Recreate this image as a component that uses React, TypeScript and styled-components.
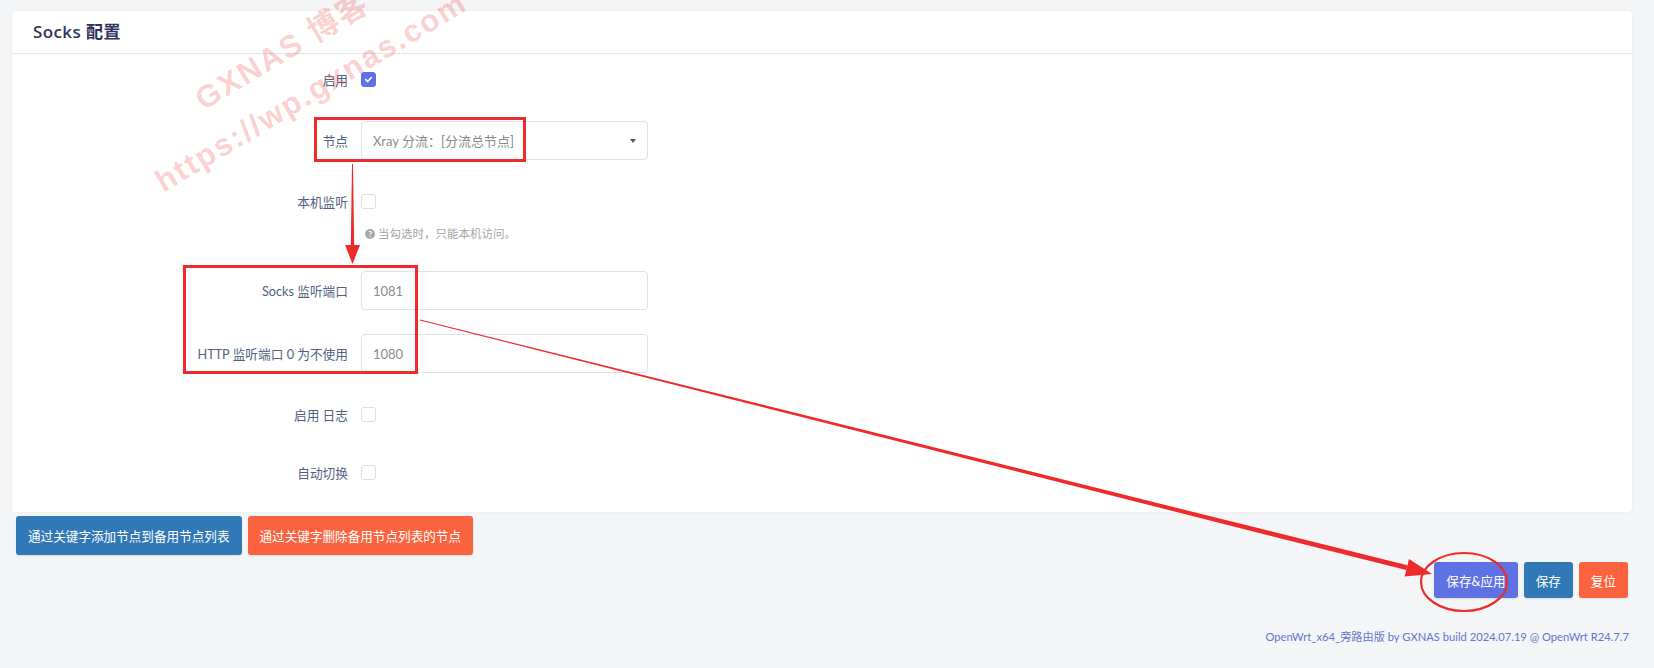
import styled, { createGlobalStyle } from "styled-components";

const GlobalStyle = createGlobalStyle`
  html, body {
    margin: 0;
    padding: 0;
    background: #f4f5f7;
    overflow: hidden;
  }
  body {
    font-family: Lato, "Noto Sans CJK SC", sans-serif;
  }
`;

const Page = styled.div`
  position: relative;
  width: 1654px;
  height: 668px;
  box-sizing: border-box;
  padding: 11px 22px 0 12px;
  background: #f4f5f7;
`;

const Card = styled.section`
  background: #fff;
  border-radius: 4px;
  box-shadow: 0 0 3px rgba(136, 152, 170, 0.12);
`;

const CardTitle = styled.h3`
  margin: 0;
  height: 42px;
  line-height: 42px;
  padding: 0 21px;
  border-bottom: 1px solid #e3e5e9;
  font-family: "Open Sans", "Noto Sans CJK SC", sans-serif;
  font-size: 17px;
  font-weight: 600;
  letter-spacing: 0.4px;
  color: #32325d;
`;

const CardBody = styled.div`
  display: flex;
  flex-direction: column;
  gap: 22px;
  padding: 6px 0 20px;
`;

const Row = styled.div<{ $push?: number }>`
  display: grid;
  grid-template-columns: 336px 287px;
  grid-template-rows: 39px;
  grid-auto-rows: auto;
  column-gap: 13px;
  align-items: center;
  margin-top: ${(p) => p.$push ?? 0}px;
`;

const Label = styled.label`
  text-align: right;
  font-size: 12.7px;
  color: #525f7f;
  white-space: nowrap;
`;

const Check = styled.span<{ $on?: boolean }>`
  display: inline-flex;
  align-items: center;
  justify-content: center;
  box-sizing: border-box;
  width: 15px;
  height: 15px;
  border-radius: 3px;
  border: 1px solid ${(p) => (p.$on ? "#5e72e4" : "#dcdfe4")};
  background: ${(p) => (p.$on ? "#5e72e4" : "#fff")};
`;

const Box = styled.div`
  display: flex;
  align-items: center;
  justify-content: space-between;
  box-sizing: border-box;
  height: 39px;
  padding: 0 11px;
  border: 1px solid #dee1e6;
  border-radius: 4px;
  font-size: 13px;
  color: #8a8a8a;
`;

const Caret = styled.span`
  width: 0;
  height: 0;
  border-left: 3.5px solid transparent;
  border-right: 3.5px solid transparent;
  border-top: 4px solid #555;
`;

const Help = styled.div`
  grid-column: 2;
  display: flex;
  align-items: center;
  gap: 3px;
  margin: 4px 0 0 4px;
  padding-bottom: 6px;
  font-size: 11.5px;
  line-height: 18px;
  color: #a4a4a4;
  white-space: nowrap;
`;

const HelpIcon = styled.span`
  display: inline-flex;
  align-items: center;
  justify-content: center;
  width: 10px;
  height: 10px;
  border-radius: 50%;
  background: #a8a8a8;
  color: #fff;
  font-size: 8px;
  font-weight: 700;
  line-height: 1;
`;

const ButtonBar = styled.div<{ $right?: boolean }>`
  display: flex;
  justify-content: ${(p) => (p.$right ? "flex-end" : "flex-start")};
  gap: 6px;
  margin-top: ${(p) => (p.$right ? "7px" : "4px")};
  padding: ${(p) => (p.$right ? "0 4px 0 0" : "0 0 0 4px")};
`;

const Button = styled.button<{ $tone: "primary" | "blue" | "orange"; $tall?: boolean }>`
  height: ${(p) => (p.$tall ? "39px" : "36px")};
  padding: 0 12px;
  border: none;
  border-radius: 3px;
  font-family: Lato, "Noto Sans CJK SC", sans-serif;
  font-size: 12.6px;
  color: #fff;
  background: ${(p) =>
    p.$tone === "primary" ? "#5e72e4" : p.$tone === "blue" ? "#3178b7" : "#fb633f"};
  box-shadow: 0 1px 2px rgba(0, 0, 0, 0.1);
`;

const Footer = styled.div`
  margin: 30px 3px 0 0;
  text-align: right;
  font-size: 11.2px;
  line-height: 18px;
  color: #6674cc;
`;

const Watermark = styled.div<{ $left: number; $top: number }>`
  position: absolute;
  left: ${(p) => p.$left}px;
  top: ${(p) => p.$top}px;
  font-family: "Liberation Sans", "Noto Sans CJK SC", sans-serif;
  font-size: 31px;
  font-weight: 700;
  line-height: 31px;
  letter-spacing: 2px;
  white-space: nowrap;
  color: rgba(240, 50, 50, 0.24);
  transform-origin: 0 100%;
  transform: rotate(-31deg);
  pointer-events: none;
`;

const Marks = styled.svg`
  position: absolute;
  left: 0;
  top: 0;
  pointer-events: none;
`;

const CheckMark = () => (
  <svg width="9" height="9" viewBox="0 0 10 10">
    <path d="M2 5.2 L4.2 7.3 L8.2 2.8" fill="none" stroke="#fff" strokeWidth="1.8" strokeLinecap="round" strokeLinejoin="round" />
  </svg>
);

export default function App() {
  return (
    <>
      <GlobalStyle />
      <Page>
        <Card>
          <CardTitle>Socks 配置</CardTitle>
          <CardBody>
            <Row>
              <Label>启用</Label>
              <Check $on>
                <CheckMark />
              </Check>
            </Row>
            <Row>
              <Label>节点</Label>
              <Box>
                <span>Xray 分流：[分流总节点]</span>
                <Caret />
              </Box>
            </Row>
            <Row>
              <Label>本机监听</Label>
              <Check />
              <Help>
                <HelpIcon>?</HelpIcon>
                当勾选时，只能本机访问。
              </Help>
            </Row>
            <Row>
              <Label>Socks 监听端口</Label>
              <Box>1081</Box>
            </Row>
            <Row $push={2}>
              <Label>HTTP 监听端口 0 为不使用</Label>
              <Box>1080</Box>
            </Row>
            <Row>
              <Label>启用 日志</Label>
              <Check />
            </Row>
            <Row $push={-3}>
              <Label>自动切换</Label>
              <Check />
            </Row>
          </CardBody>
        </Card>

        <ButtonBar>
          <Button $tone="blue" $tall>通过关键字添加节点到备用节点列表</Button>
          <Button $tone="orange" $tall>通过关键字删除备用节点列表的节点</Button>
        </ButtonBar>

        <ButtonBar $right>
          <Button $tone="primary">保存&amp;应用</Button>
          <Button $tone="blue">保存</Button>
          <Button $tone="orange">复位</Button>
        </ButtonBar>

        <Footer>OpenWrt_x64_旁路由版 by GXNAS build 2024.07.19 @ OpenWrt R24.7.7</Footer>

        <Watermark $left={206} $top={84}>GXNAS 博客</Watermark>
        <Watermark $left={166} $top={166}>https://wp.gxnas.com</Watermark>

        <Marks width="1654" height="668" viewBox="0 0 1654 668">
          <g fill="none" stroke="#ee2a2a" strokeWidth="3">
            <rect x="315.5" y="118.5" width="209" height="42" />
            <rect x="184.5" y="266.5" width="232" height="106" />
          </g>
          <g fill="#ee2a2a">
            <polygon points="352,164 353,164 354.2,246 350.8,246" />
            <polygon points="345,245 360,245 352.5,264" />
            <polygon points="419.9,320.5 420.1,319.5 1407.4,565.3 1406.2,570.1" />
            <polygon points="1404.6,576.4 1409.0,559.0 1432,574" />
          </g>
          <ellipse cx="1464" cy="582" rx="43" ry="29" fill="none" stroke="#ee2a2a" strokeWidth="2.2" />
        </Marks>
      </Page>
    </>
  );
}
